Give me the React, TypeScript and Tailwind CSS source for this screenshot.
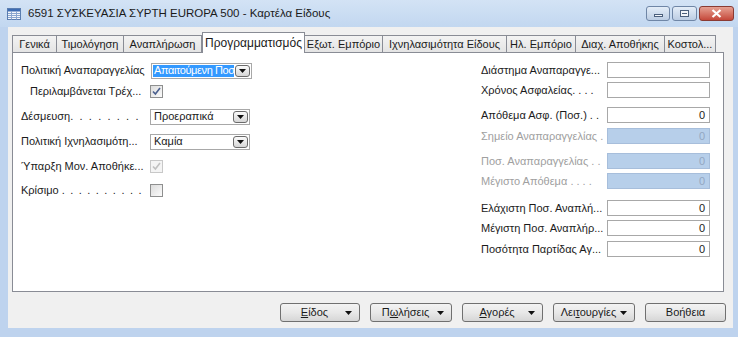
import React from 'react';
import clsx from 'clsx';

// Navision item card, "Προγραμματισμός" tab

const tabs = [
  { label: 'Γενικά', w: 'w-[45px]' },
  { label: 'Τιμολόγηση', w: 'w-[68px]' },
  { label: 'Αναπλήρωση', w: 'w-[79px]' },
  { label: 'Προγραμματισμός', w: 'w-[103px]', active: true },
  { label: 'Εξωτ. Εμπόριο', w: 'w-[79px]' },
  { label: 'Ιχνηλασιμότητα Είδους', w: 'w-[125px]' },
  { label: 'Ηλ. Εμπόριο', w: 'w-[70px]' },
  { label: 'Διαχ. Αποθήκης', w: 'w-[90px]' },
  { label: 'Κοστολ...', w: 'w-[52px]' },
];

const DownArrow = () => (
  <svg width="7" height="4" viewBox="0 0 7 4" className="shrink-0">
    <path d="M0 0h7L3.5 4z" fill="#111" />
  </svg>
);

const Label = ({ children, muted, className }: { children: React.ReactNode; muted?: boolean; className?: string }) => (
  <span className={clsx('whitespace-nowrap text-[11px] leading-none', muted ? 'text-[#a0a0a0]' : 'text-[#1b1b1b]', className)}>
    {children}
  </span>
);

const Field = ({ value, disabled }: { value?: string; disabled?: boolean }) => (
  <div
    className={clsx(
      'w-[103px] h-[16px] border flex items-center justify-end pr-[4px] text-[11px] leading-none',
      disabled ? 'bg-[#b7cfea] border-[#a7bedb] text-[#93a7c2]' : 'bg-white border-[#a8a8a8] text-[#1b1b1b]'
    )}
  >
    {value}
  </div>
);

const Combo = ({ value, selected, className }: { value: string; selected?: boolean; className?: string }) => (
  <div className={clsx('h-[16px] border border-[#a8a8a8] bg-white flex items-center pl-[1px] pr-[1px]', className)}>
    <span
      className={clsx(
        'h-[12px] flex items-center text-[11px] leading-none whitespace-nowrap',
        selected ? 'bg-[#3399ff] text-white w-[81px] pl-[1px] tracking-[-0.4px]' : 'text-[#1b1b1b] pl-[2px]'
      )}
    >
      {value}
    </span>
    <div className="ml-auto w-[15px] h-[12px] rounded-[3px] border border-[#6b6b6b] bg-gradient-to-b from-[#fbfbfb] to-[#d6d6d6] flex items-center justify-center">
      <DownArrow />
    </div>
  </div>
);

const Check = ({ checked, disabled }: { checked?: boolean; disabled?: boolean }) => (
  <div
    className={clsx(
      'w-[13px] h-[13px] border flex items-center justify-center',
      disabled ? 'border-[#c8c8c8] bg-[#f4f4f4]' : 'border-[#8e8f8f] bg-gradient-to-br from-[#dcdcdc] to-[#fbfbfb]'
    )}
  >
    {checked && (
      <svg width="9" height="9" viewBox="0 0 9 9">
        <path d="M1 4.5l2.4 2.6L8 1" fill="none" stroke={disabled ? '#c0c0c0' : '#4a5f8e'} strokeWidth="1.6" />
      </svg>
    )}
  </div>
);

const BottomButton = ({ children, arrow, w }: { children: React.ReactNode; arrow?: boolean; w: string }) => (
  <div
    className={clsx(
      'h-[19px] rounded-[3px] border border-[#707070] bg-gradient-to-b from-[#f3f3f3] via-[#e8e8e8] to-[#d6d6d6] flex items-center text-[11px] leading-none text-[#1b1b1b] whitespace-nowrap',
      w,
      arrow ? 'pl-[3px] pr-[7px]' : 'justify-center'
    )}
  >
    <span className={clsx(arrow && 'flex-1 text-center')}>{children}</span>
    {arrow && <DownArrow />}
  </div>
);

const TitleIcon = () => (
  <svg width="14" height="12" viewBox="0 0 14 12">
    <rect x="0.5" y="0.5" width="13" height="11" fill="#f4f7fb" stroke="#5a7db0" />
    <rect x="1" y="1" width="12" height="2.5" fill="#3e6db3" />
    <path d="M1 5.5h12M1 7.5h12M1 9.5h12M4.5 3.5v8M9.5 3.5v8" stroke="#8aa6cf" strokeWidth="1" />
  </svg>
);

export default function App() {
  return (
    <div className="w-[738px] h-[337px] overflow-hidden bg-[#bed3ee] flex flex-col font-['Liberation_Sans','DejaVu_Sans',sans-serif]">
      {/* title bar */}
      <div className="h-[27px] flex items-center pl-[7px] bg-gradient-to-b from-[#d3e3f5] to-[#c2d7f0]">
        <TitleIcon />
        <span className="ml-[7px] text-[11.5px] text-[#1a1a1a] whitespace-nowrap">6591 ΣΥΣΚΕΥΑΣΙΑ ΣΥΡΤΗ EUROPA 500 - Καρτέλα Είδους</span>
        <div className="ml-auto mr-[4px] flex items-center gap-[2px]">
          <div className="w-[24px] h-[15px] rounded-[3px] border border-[#6f86a6] bg-gradient-to-b from-[#e4edf8] to-[#bccde3] flex items-end justify-center pb-[3px]">
            <div className="w-[9px] h-[3px] bg-[#f3f6fa] border border-[#4b5f7c]" />
          </div>
          <div className="w-[25px] h-[15px] rounded-[3px] border border-[#6f86a6] bg-gradient-to-b from-[#e4edf8] to-[#bccde3] flex items-center justify-center">
            <div className="w-[9px] h-[7px] border border-[#4b5f7c] bg-[#f3f6fa] flex items-center justify-center">
              <div className="w-[5px] h-[1px] bg-[#4b5f7c]" />
            </div>
          </div>
          <div className="w-[35px] h-[15px] rounded-[3px] border border-[#8a3b33] bg-gradient-to-b from-[#e5a093] to-[#c4473a] flex items-center justify-center">
            <svg width="11" height="9" viewBox="0 0 11 9">
              <path d="M1.5 1l8 7M9.5 1l-8 7" stroke="#fff" strokeWidth="2.2" />
            </svg>
          </div>
        </div>
      </div>

      {/* body */}
      <div className="flex-1 ml-[8px] mr-[5px] mb-[9px] bg-[#f0f0f0] flex flex-col pt-[5px] pl-[4px]">
        {/* tabs */}
        <div className="h-[20px] flex items-end relative z-10">
          {tabs.map((t) =>
            t.active ? (
              <div
                key={t.label}
                className={clsx(
                  t.w,
                  'h-[21px] -mb-px bg-white border border-b-0 border-[#898c95] flex items-center justify-center text-[12px] leading-none text-[#1b1b1b] whitespace-nowrap'
                )}
              >
                {t.label}
              </div>
            ) : (
              <div
                key={t.label}
                className={clsx(
                  t.w,
                  '-ml-px first:ml-0 h-[17px] bg-gradient-to-b from-[#f3f3f3] to-[#e4e4e4] border border-b-0 border-[#898c95] flex items-center justify-center text-[11px] leading-none text-[#1b1b1b] whitespace-nowrap overflow-hidden'
                )}
              >
                {t.label}
              </div>
            )
          )}
        </div>

        {/* tab page */}
        <div className="w-[712px] h-[240px] bg-white border border-[#898c95] flex">
          {/* left column */}
          <div className="w-[468px] pl-[8px] pt-[9px] flex flex-col">
            <div className="h-[17px] flex items-center">
              <Label className="w-[130px]">Πολιτική Αναπαραγγελίας</Label>
              <Combo value="Απαιτούμενη Ποσ" selected className="w-[101px]" />
            </div>
            <div className="h-[17px] mt-[4px] flex items-center">
              <Label className="w-[129px] pl-[9px]">Περιλαμβάνεται Τρέχ...</Label>
              <Check checked />
            </div>
            <div className="h-[17px] mt-[8px] flex items-center">
              <Label className="w-[129px]">
                Δέσμευση<span className="tracking-[1.6px]">. . . . . . . .</span>
              </Label>
              <Combo value="Προεραπικά" className="w-[100px]" />
            </div>
            <div className="h-[17px] mt-[8px] flex items-center">
              <Label className="w-[129px]">Πολιτική Ιχνηλασιμότη...</Label>
              <Combo value="Καμία" className="w-[100px]" />
            </div>
            <div className="h-[17px] mt-[8px] flex items-center">
              <Label className="w-[129px]">Ύπαρξη Μον. Αποθήκε...</Label>
              <Check checked disabled />
            </div>
            <div className="h-[17px] mt-[7px] flex items-center">
              <Label className="w-[129px]">
                Κρίσιμο <span className="tracking-[1.2px]">. . . . . . . . . .</span>
              </Label>
              <Check />
            </div>
          </div>

          {/* right column */}
          <div className="flex-1 pt-[9px] flex flex-col">
            <div className="flex items-center">
              <Label className="w-[126px]">Διάστημα Αναπαραγγε...</Label>
              <Field />
            </div>
            <div className="mt-[4px] flex items-center">
              <Label className="w-[126px]">Χρόνος Ασφαλείας. . . .</Label>
              <Field />
            </div>
            <div className="mt-[9px] flex items-center">
              <Label className="w-[126px]">Απόθεμα Ασφ. (Ποσ.) . .</Label>
              <Field value="0" />
            </div>
            <div className="mt-[5px] flex items-center">
              <Label muted className="w-[126px]">Σημείο Αναπαραγγελίας .</Label>
              <Field value="0" disabled />
            </div>
            <div className="mt-[9px] flex items-center">
              <Label muted className="w-[126px]">Ποσ. Αναπαραγγελίας . .</Label>
              <Field value="0" disabled />
            </div>
            <div className="mt-[4px] flex items-center">
              <Label muted className="w-[126px]">Μέγιστο Απόθεμα . . . .</Label>
              <Field value="0" disabled />
            </div>
            <div className="mt-[11px] flex items-center">
              <Label className="w-[126px]">Ελάχιστη Ποσ. Αναπλή...</Label>
              <Field value="0" />
            </div>
            <div className="mt-[4px] flex items-center">
              <Label className="w-[126px]">Μέγιστη Ποσ. Αναπλήρ...</Label>
              <Field value="0" />
            </div>
            <div className="mt-[5px] flex items-center">
              <Label className="w-[126px]">Ποσότητα Παρτίδας Αγ...</Label>
              <Field value="0" />
            </div>
          </div>
        </div>

        {/* bottom buttons */}
        <div className="mt-[11px] ml-[268px] flex gap-[10px]">
          <BottomButton arrow w="w-[80px]">
            <span className="underline">Ε</span>ίδος
          </BottomButton>
          <BottomButton arrow w="w-[82px]">
            Π<span className="underline">ω</span>λήσεις
          </BottomButton>
          <BottomButton arrow w="w-[81px]">
            <span className="underline">Α</span>γορές
          </BottomButton>
          <BottomButton arrow w="w-[82px]">
            Λει<span className="underline">τ</span>ουργίες
          </BottomButton>
          <BottomButton w="w-[81px]">Βοήθεια</BottomButton>
        </div>
      </div>
    </div>
  );
}
